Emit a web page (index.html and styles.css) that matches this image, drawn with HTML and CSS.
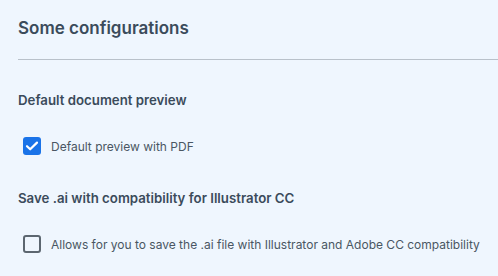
FILE: index.html
```html
<!DOCTYPE html>
<html lang="en">
<head>
	<meta charset="utf-8" />
	<title>Some configurations</title>
	<link rel="stylesheet" href="styles.css">
</head>
<body>

<div class="panel">
	<h1 class="title">Some configurations</h1>

	<div class="section">
		<h2>Default document preview</h2>
		<label class="option">
			<span class="box checked">
				<svg viewBox="0 0 18 18" width="18" height="18"><path d="M4 9.2l3.2 3.1L14 5.6" fill="none" stroke="#fff" stroke-width="2.2" stroke-linecap="round" stroke-linejoin="round"/></svg>
			</span>
			<span class="option-label">Default preview with PDF</span>
		</label>
	</div>

	<div class="section">
		<h2>Save .ai with compatibility for Illustrator CC</h2>
		<label class="option">
			<span class="box"></span>
			<span class="option-label">Allows for you to save the .ai file with Illustrator and Adobe CC compatibility</span>
		</label>
	</div>
</div>

</body>
</html>
```

FILE: styles.css
```css
html,
body {
	margin: 0;
	height: 100%;
	background: #eff6fe;
}
body {
	font-family: 'Inter', sans-serif;
	color: #3b4b5b;
}
.panel {
	padding: 0 0 0 18px;
}
.title {
	margin: 0;
	padding: 16px 0 18px 0;
	font-size: 17px;
	font-weight: 600;
	line-height: 25px;
	border-bottom: 1px solid #b9c1ca;
}
.section {
	padding-top: 31px;
}
.section + .section {
	padding-top: 34px;
}
h2 {
	margin: 0;
	font-size: 13.25px;
	font-weight: 600;
	line-height: 18px;
}
.option {
	display: flex;
	align-items: center;
	gap: 10px;
	margin: 28px 0 0 5px;
	font-size: 12px;
}
.box {
	width: 18px;
	height: 18px;
	box-sizing: border-box;
	border: 2px solid #5c6670;
	border-radius: 3px;
	display: flex;
}
.box.checked {
	border: none;
	background: #1a73e8;
}
.option-label {
	color: #4a5663;
}
```
